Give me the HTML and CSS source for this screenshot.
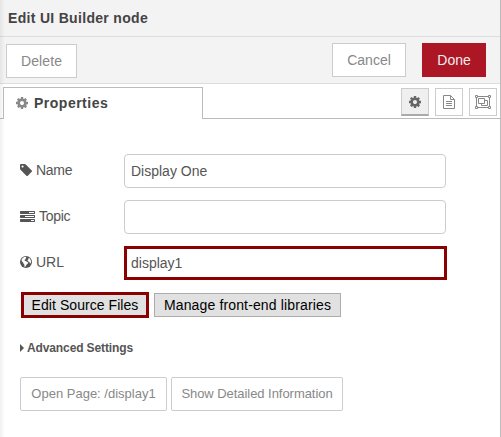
FILE: index.html
```html
<!DOCTYPE html>
<html lang="en">
<head>
<meta charset="utf-8">
<title>Edit UI Builder node</title>
<link rel="stylesheet" href="styles.css">
</head>
<body>
<svg class="defs" width="0" height="0" aria-hidden="true">
  <symbol id="cog" viewBox="128 128 1536 1536"><path d="M1152 896q0-106-75-181t-181-75-181 75-75 181 75 181 181 75 181-75 75-181zm512-109v222q0 12-8 23t-20 13l-185 28q-19 54-39 91 35 50 107 138 10 12 10 25t-9 23q-27 37-99 108t-94 71q-12 0-26-9l-138-108q-44 23-91 38-16 136-29 186-7 28-36 28h-222q-14 0-24.500-8.500t-11.500-21.500l-28-184q-49-16-90-37l-141 107q-10 9-25 9-14 0-25-11-126-114-165-168-7-10-7-23 0-12 8-23 15-21 51-66.500t54-70.500q-27-50-41-99l-183-27q-13-2-21-12.500t-8-23.500v-222q0-12 8-23t19-13l186-28q14-46 39-92-40-57-107-138-10-12-10-24 0-10 9-23 26-36 98.500-107.500t94.500-71.500q13 0 26 10l138 107q44-23 91-38 16-136 29-186 7-28 36-28h222q14 0 24.500 8.500t11.500 21.500l28 184q49 16 90 37l142-107q9-9 24-9 13 0 25 10 129 119 165 170 7 8 7 22 0 12-8 23-15 21-51 66.500t-54 70.500q26 50 41 98l183 28q13 2 21 12.500t8 23.500z"/></symbol>
</svg>
<main class="tray">
  <header class="title"><span class="t-title">Edit UI Builder node</span></header>
  <div class="toolbar">
    <button class="btn delete">Delete</button>
    <button class="btn cancel">Cancel</button>
    <button class="btn done">Done</button>
  </div>
  <nav class="tabs">
    <div class="tab"><svg class="tab-icon" width="12" height="12"><use href="#cog"/></svg><span class="t-tab">Properties</span></div>
    <div class="tools">
      <button class="tool active"><svg width="12" height="12"><use href="#cog"/></svg></button>
      <button class="tool"><svg class="line" width="12" height="14" viewBox="0 0 12 14"><path d="M.5.5h7l4 4v9H.5zM7.500.5v4h4M3 6.500h6M3 8.500h6M3 10.500h6"/></svg></button>
      <button class="tool"><svg class="line" width="16" height="14" viewBox="0 0 16 14"><path d="M3 1.500h10M3 12.500h10M1.500 3v8M14.500 3v8M.5.5h2v2h-2zM13.500.5h2v2h-2zM.5 11.500h2v2h-2zM13.500 11.500h2v2h-2zM3.500 3.500h6v5h-6zM9.500 5.500h3v5h-6v-2"/></svg></button>
    </div>
  </nav>
  <form class="form">
    <div class="row">
      <label><svg class="tag" width="12" height="12" viewBox="128 128 1515 1515"><path d="M576 448q0-53-37.500-90.500t-90.500-37.500-90.500 37.500-37.500 90.500 37.500 90.500 90.500 37.500 90.500-37.500 37.500-90.500zm1067 576q0 53-37 90l-491 492q-39 37-91 37-53 0-90-37l-715-716q-38-37-64.500-101t-26.500-117v-416q0-52 38-90t90-38h416q53 0 117 26.500t102 64.500l715 714q37 39 37 91z"/></svg><span class="t-name">Name</span></label>
      <input class="field" type="text" value="Display One">
    </div>
    <div class="row">
      <label><svg class="tasks" width="15" height="11" viewBox="0 0 15 11"><path fill-rule="evenodd" d="M.5 0h14l.5.5v2l-.5.5H.5L0 2.500v-2zM9 1v1h5V1zM.5 4h14l.5.5v2l-.5.5H.5L0 6.500v-2zM5 5v1h9V5zM.5 8h14l.5.5v2l-.5.5H.5l-.5-.5v-2zM11 9v1h3V9z"/></svg><span class="t-topic">Topic</span></label>
      <input class="field" type="text" value="">
    </div>
    <div class="row">
      <label><svg class="globe" width="12" height="12" viewBox="0 0 12 12"><circle cx="6" cy="6" r="6"/><path fill="#fff" d="M4.400 1 6 .8l.3.8-.7.6.4.5-1 .8-.5 1 .8.6.9.1 1 .7 1 .5-.3 1.200-1.200.9-.9 1.300-.5 1.200-.7-.1-.3-2.300-.9-1-.2-1.100L2 5.400l-.5-1.500C2 2.700 3 1.500 4.400 1zM8.200 2.200l1-.4 1.500 2.200.4 1.800-.4 1.500-.8.2-.4-1.600-1.300-.3-.7-1 .5-1.200.8-.4z"/></svg><span class="t-url">URL</span></label>
      <input class="field marked" type="text" value="display1">
    </div>
    <div class="actions">
      <button type="button" class="plain outlined"><span class="t-edit">Edit Source Files</span></button>
      <button type="button" class="plain"><span class="t-manage">Manage front-end libraries</span></button>
    </div>
    <div class="advanced"><svg width="4" height="8" viewBox="0 0 4 8"><path d="M0 0 4 4 0 8z"/></svg><span class="t-adv">Advanced Settings</span></div>
    <div class="links">
      <button type="button" class="btn small open"><span class="t-open">Open Page: /display1</span></button>
      <button type="button" class="btn small show"><span class="t-show">Show Detailed Information</span></button>
    </div>
  </form>
</main>
</body>
</html>
```
FILE: styles.css
```css
* { box-sizing: border-box; }
body { margin: 0; font: 14px/20px "Liberation Sans", Arial, sans-serif; color: #555; background: #fff; overflow: hidden; }
button, input { font: inherit; margin: 0; }
svg { display: block; fill: currentColor; flex: none; }
.line { fill: none; stroke: currentColor; }
.defs { position: absolute; }
span { white-space: nowrap; }
.tray { position: relative; width: 501px; height: 437px; border-right: 1px solid #bbb; }
.tray::before { content: ""; position: absolute; inset: 0 auto 0 0; width: 5px; background: linear-gradient(90deg, rgba(0,0,0,.06), transparent); }
.title { height: 37px; padding: 8px; background: #f3f3f3; border-bottom: 1px solid #ddd; font-weight: bold; color: #444; }
.t-title { letter-spacing: .31px; }
.toolbar { display: flex; align-items: flex-start; height: 47px; padding: 6px 14px 0 6px; background: #f3f3f3; border-bottom: 1px solid #ddd; }
.btn { height: 34px; padding: 0; border: 1px solid #ccc; background: #fff; color: #888; font-size: 14px; line-height: 20px; white-space: nowrap; }
.delete { width: 71px; margin-top: 1px; letter-spacing: .1px; }
.cancel { width: 74px; margin-left: auto; }
.done { width: 64px; margin-left: 16px; background: #ad1625; border-color: #ad1625; color: #eee; }
.tabs { display: flex; height: 35px; padding-top: 3px; background: linear-gradient(#bbb, #bbb) bottom / 100% 1px no-repeat; }
.tab { position: relative; display: flex; align-items: center; width: 200px; height: 32px; margin-left: 3px; padding: 0 0 2px 12px; border: 1px solid #bbb; border-bottom: 0; background: #fff; font-weight: bold; color: #444; }
.tab-icon { color: #888; margin-right: 6px; }
.t-tab { letter-spacing: .5px; }
.tools { display: flex; gap: 6px; margin: 1px 3px 0 auto; }
.tool { display: flex; align-items: center; justify-content: center; width: 28px; height: 28px; padding: 0; border: 1px solid #ccc; background: #fff; color: #888; }
.active { background: #efefef; border-bottom: 2px solid #aaa; color: #666; }
.form { padding: 35px 0 0 20px; }
.row { display: flex; height: 34px; margin-bottom: 12px; }
label { display: flex; align-items: center; width: 104px; padding-bottom: 2px; }
.tag, .globe { margin-right: 4px; }
.tasks { margin-right: 4px; }
.t-name, .t-topic { letter-spacing: -.3px; }
.field { width: 322px; height: 34px; padding: 0 6px; border: 1px solid #ccc; border-radius: 4px; background: #fff; color: #555; outline: 0; }
.marked { width: 323px; padding: 0 4px; border: 3px solid #8b0000; border-radius: 0; }
.actions { display: flex; align-items: center; gap: 5px; height: 26px; margin-left: 1px; }
.plain { width: 187px; height: 24px; padding: 0; border: 1px solid #adadad; background: #e1e1e1; color: #000; line-height: 18px; }
.outlined { width: 128px; height: 26px; border: 3px solid #8b0000; }
.t-edit { letter-spacing: .06px; }
.t-manage { letter-spacing: .14px; }
.advanced { display: flex; align-items: center; height: 20px; margin-top: 20px; font-size: 12px; font-weight: bold; }
.advanced svg { margin-right: 3px; }
.t-adv { letter-spacing: -.12px; }
.links { display: flex; gap: 4px; margin-top: 19px; }
.small { font-size: 13px; border-radius: 2px; }
.open { width: 147px; }
.show { width: 172px; }
.t-show { letter-spacing: -.05px; }
```
